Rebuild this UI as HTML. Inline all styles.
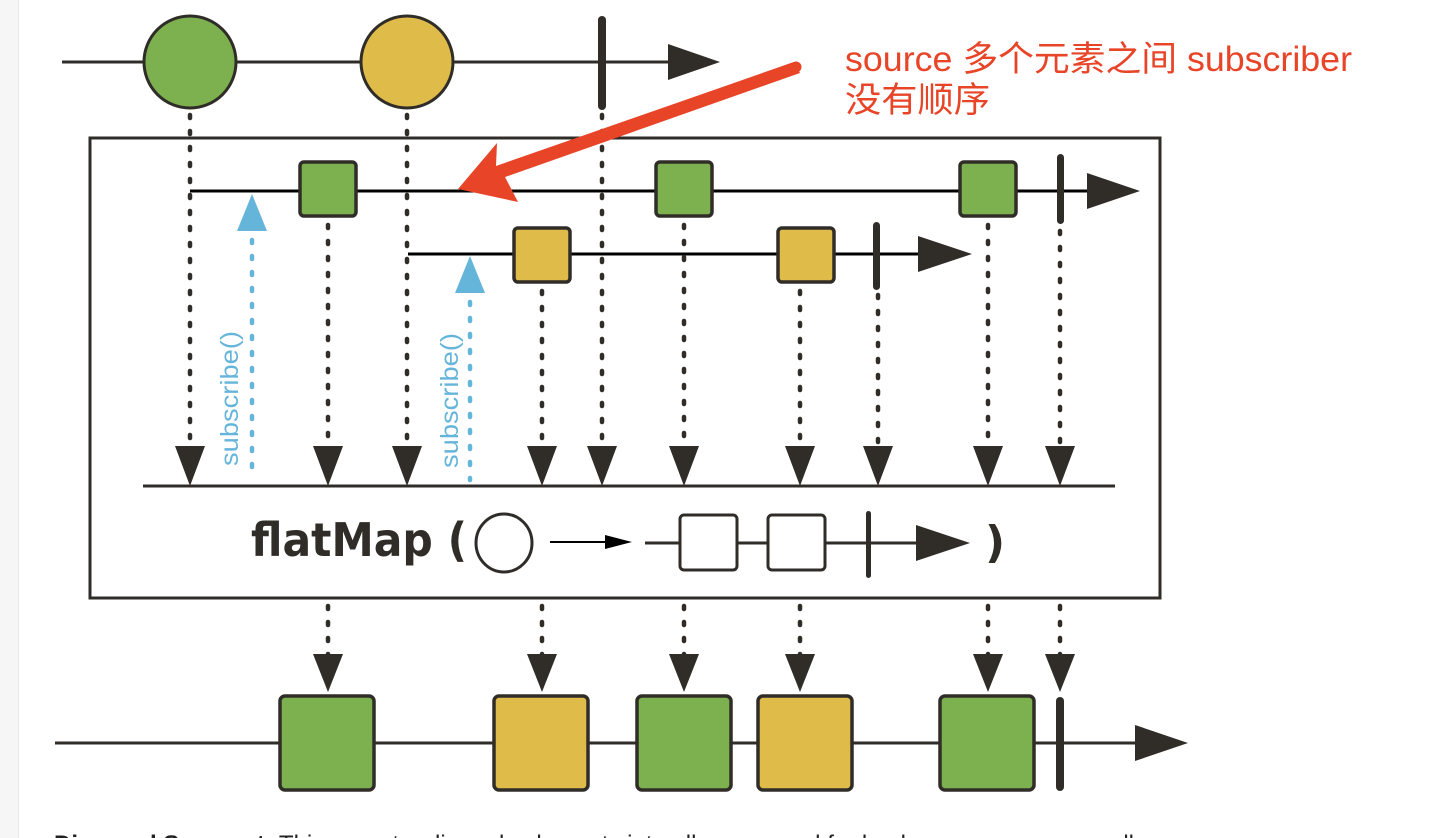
<!DOCTYPE html>
<html><head><meta charset="utf-8"><style>
html,body{margin:0;padding:0;background:#fff;width:1430px;height:838px;overflow:hidden}
svg{display:block}
</style></head><body>
<svg width="1430" height="838" viewBox="0 0 1430 838" xmlns="http://www.w3.org/2000/svg">
<rect x="0" y="0" width="18" height="838" fill="#f6f6f6"/>
<rect x="18" y="0" width="1" height="838" fill="#e8e8e8"/>
<g stroke="#302d29" fill="none">
 <line x1="62" y1="62" x2="672" y2="62" stroke-width="3"/>
 <rect x="90" y="138" width="1070" height="460" stroke-width="3"/>
 <line x1="190" y1="191" x2="1090" y2="191" stroke="#000" stroke-width="3"/>
 <line x1="408" y1="254" x2="922" y2="254" stroke="#000" stroke-width="3"/>
 <line x1="143" y1="486" x2="1115" y2="486" stroke-width="3"/>
 <line x1="55" y1="743" x2="1140" y2="743" stroke-width="3"/>
 <g stroke-width="4.5" stroke-dasharray="3 13" stroke-linecap="round">
  <line x1="190" y1="115" x2="190" y2="448"/>
  <line x1="407" y1="115" x2="407" y2="448"/>
  <line x1="602" y1="115" x2="602" y2="448"/>
  <line x1="328" y1="225" x2="328" y2="448"/>
  <line x1="684" y1="225" x2="684" y2="448"/>
  <line x1="988" y1="225" x2="988" y2="448"/>
  <line x1="1060" y1="231" x2="1060" y2="448"/>
  <line x1="542" y1="291" x2="542" y2="448"/>
  <line x1="800" y1="291" x2="800" y2="448"/>
  <line x1="878" y1="295" x2="878" y2="448"/>
  <line x1="328" y1="606" x2="328" y2="655"/>
  <line x1="542" y1="606" x2="542" y2="655"/>
  <line x1="684" y1="606" x2="684" y2="655"/>
  <line x1="800" y1="606" x2="800" y2="655"/>
  <line x1="988" y1="606" x2="988" y2="655"/>
  <line x1="1060" y1="606" x2="1060" y2="655"/>
 </g>
 <g stroke="#65b5db" stroke-width="4.5" stroke-dasharray="3 13" stroke-linecap="round">
  <line x1="252" y1="240" x2="252" y2="480"/>
  <line x1="470" y1="302" x2="470" y2="480"/>
 </g>
</g>
<g fill="#302d29">
 <polygon points="668,44 720,62 668,80"/>
 <polygon points="1087,173 1140,191 1087,209"/>
 <polygon points="918,236 972,254 918,272"/>
 <polygon points="1135,725 1188,743 1135,761"/>
 <polygon points="175,446 205,446 190,486"/>
 <polygon points="313,446 343,446 328,486"/>
 <polygon points="392,446 422,446 407,486"/>
 <polygon points="527,446 557,446 542,486"/>
 <polygon points="587,446 617,446 602,486"/>
 <polygon points="669,446 699,446 684,486"/>
 <polygon points="785,446 815,446 800,486"/>
 <polygon points="863,446 893,446 878,486"/>
 <polygon points="973,446 1003,446 988,486"/>
 <polygon points="1045,446 1075,446 1060,486"/>
 <polygon points="313,654 343,654 328,692"/>
 <polygon points="527,654 557,654 542,692"/>
 <polygon points="669,654 699,654 684,692"/>
 <polygon points="785,654 815,654 800,692"/>
 <polygon points="973,654 1003,654 988,692"/>
 <polygon points="1045,654 1075,654 1060,692"/>
 <rect x="598" y="16" width="8" height="94" rx="4"/>
 <rect x="1057" y="154" width="7" height="70" rx="3.5"/>
 <rect x="873" y="222" width="7" height="68" rx="3.5"/>
 <rect x="1056" y="697" width="8" height="94" rx="4"/>
</g>
<polygon points="252,194 267,231 237,231" fill="#65b5db"/>
<polygon points="470,256 485,293 455,293" fill="#65b5db"/>
<circle cx="190" cy="62" r="46" fill="#7db04e" stroke="#302d29" stroke-width="3"/>
<circle cx="407" cy="62" r="46" fill="#dfbb4a" stroke="#302d29" stroke-width="3"/>
<g stroke="#302d29" stroke-width="3.5">
 <rect x="300" y="162" width="56" height="54" rx="4" fill="#7db04e"/>
 <rect x="656" y="162" width="56" height="54" rx="4" fill="#7db04e"/>
 <rect x="960" y="162" width="56" height="54" rx="4" fill="#7db04e"/>
 <rect x="514" y="228" width="56" height="54" rx="4" fill="#dfbb4a"/>
 <rect x="778" y="228" width="56" height="54" rx="4" fill="#dfbb4a"/>
 <rect x="280" y="696" width="94" height="94" rx="5" fill="#7db04e"/>
 <rect x="494" y="696" width="94" height="94" rx="5" fill="#dfbb4a"/>
 <rect x="637" y="696" width="94" height="94" rx="5" fill="#7db04e"/>
 <rect x="758" y="696" width="94" height="94" rx="5" fill="#dfbb4a"/>
 <rect x="940" y="696" width="94" height="94" rx="5" fill="#7db04e"/>
</g>
<g fill="#65b5db" font-family="Liberation Sans, sans-serif" font-size="25">
 <text transform="translate(238,466) rotate(-90)" textLength="135" lengthAdjust="spacingAndGlyphs">subscribe()</text>
 <text transform="translate(458,468) rotate(-90)" textLength="135" lengthAdjust="spacingAndGlyphs">subscribe()</text>
</g>
<text x="251" y="556" font-family="DejaVu Sans Condensed, DejaVu Sans, sans-serif" font-stretch="condensed" font-weight="bold" font-size="46" fill="#302d29" textLength="216" lengthAdjust="spacingAndGlyphs">flatMap (</text>
<text x="985" y="557" font-family="DejaVu Sans, sans-serif" font-weight="bold" font-size="44" fill="#302d29">)</text>
<ellipse cx="504" cy="543" rx="28" ry="29" fill="none" stroke="#302d29" stroke-width="3"/>
<line x1="550" y1="542" x2="612" y2="542" stroke="#000" stroke-width="2"/>
<polygon points="605,535 632,542 605,549" fill="#000"/>
<line x1="645" y1="543" x2="920" y2="543" stroke="#302d29" stroke-width="3"/>
<rect x="680" y="515" width="57" height="55" rx="4" fill="#fff" stroke="#302d29" stroke-width="3"/>
<rect x="768" y="515" width="57" height="55" rx="4" fill="#fff" stroke="#302d29" stroke-width="3"/>
<rect x="866" y="511" width="5" height="67" rx="2.5" fill="#302d29"/>
<polygon points="916,525 970,543 916,561" fill="#302d29"/>
<polygon points="458,189 497,143 496,166 794,62 800,73 505,177 518,202" fill="#e84427"/>
<line x1="500" y1="172" x2="796" y2="67" stroke="#e84427" stroke-width="11" stroke-linecap="round"/>
<g fill="#e84427" font-family="Liberation Sans, 'Noto Sans CJK SC', sans-serif" font-size="35">
 <text x="845" y="71" textLength="507" lengthAdjust="spacingAndGlyphs">source 多个元素之间 subscriber</text>
 <text x="845" y="112" textLength="145" lengthAdjust="spacingAndGlyphs">没有顺序</text>
</g>
<text x="54" y="852" font-family="Liberation Sans, sans-serif" font-size="24" fill="#222"><tspan font-weight="bold">Diamond Segment:</tspan> This operator discards elements into allow mapped for back pressure process all</text>
</svg>
</body></html>
